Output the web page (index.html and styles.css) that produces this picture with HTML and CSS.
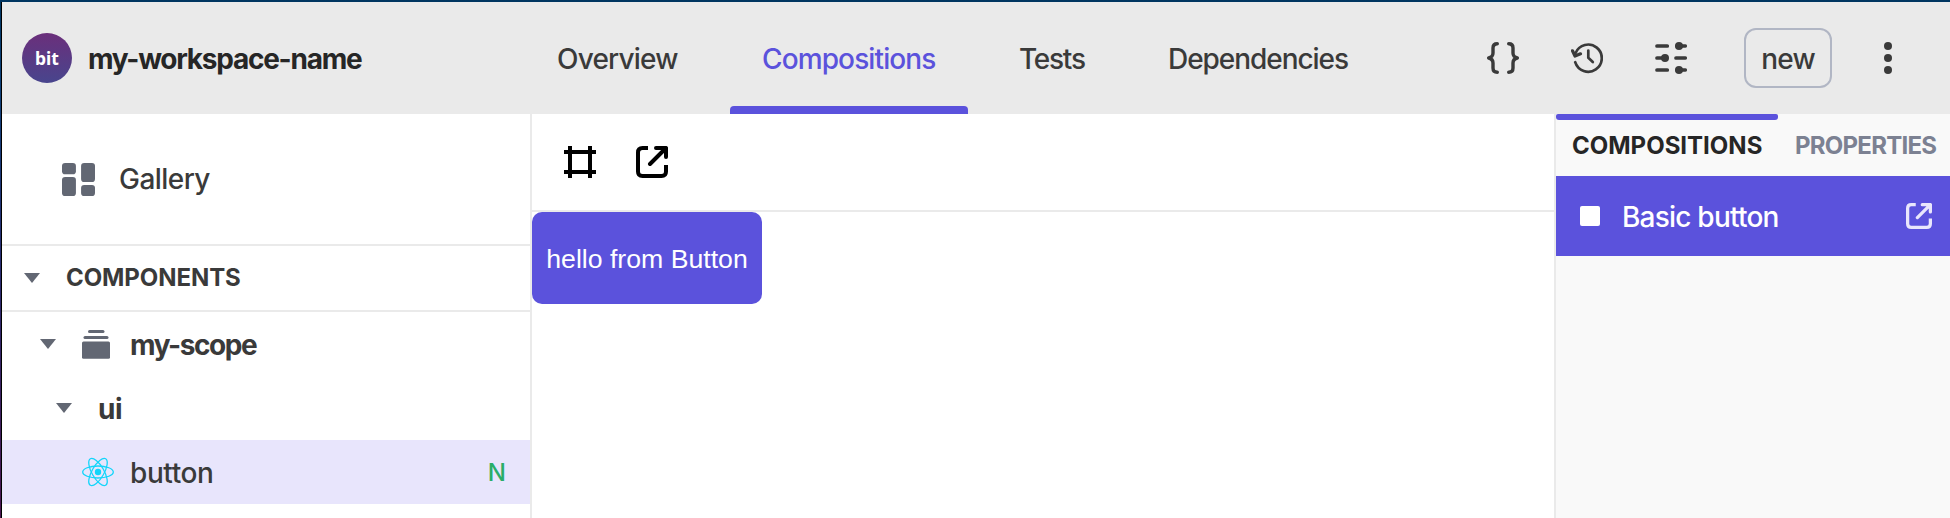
FILE: index.html
```html
<!DOCTYPE html>
<html lang="en">
<head>
<meta charset="utf-8">
<title>my-workspace-name</title>
<link rel="stylesheet" href="styles.css">
</head>
<body>
<div class="window">
  <header class="topbar">
    <div class="brand">
      <span class="logo">bit</span>
      <span class="workspace">my-workspace-name</span>
    </div>
    <nav class="tabs">
      <a class="tab tab-overview"><span>Overview</span></a>
      <a class="tab tab-compositions active"><span>Compositions</span></a>
      <a class="tab tab-tests"><span>Tests</span></a>
      <a class="tab tab-deps"><span>Dependencies</span></a>
    </nav>
    <div class="actions">
      <svg class="icon32" viewBox="0 0 32 32" fill="none" stroke="#3a3a3a" stroke-width="3.400" stroke-linecap="round" stroke-linejoin="round"><path d="M10.300 1.800Q6 1.800 6 6V11Q6 15 1.700 16Q6 17 6 21V26Q6 30.200 10.300 30.200M21.700 1.800Q26 1.800 26 6V11Q26 15 30.300 16Q26 17 26 21V26Q26 30.200 21.700 30.200"/></svg>
      <svg class="icon32" viewBox="0 0 32 32" fill="none" stroke="#3a3a3a" stroke-width="2.700" stroke-linecap="round" stroke-linejoin="round"><path d="M4.600 11A13.600 13.600 0 1 1 4.200 20.200"/><path d="M1.500 8.800L4 14L9.500 11.800" stroke-width="3.200"/><path d="M17.300 8.500V15.800L21.800 20"/></svg>
      <svg class="icon32" viewBox="0 0 32 32" fill="none" stroke="#3a3a3a" stroke-width="3.700" stroke-linecap="round"><path d="M2 4H12.300M22 4H30.200M2 16H9M21 16H30.200M2 28H12.300M22 28H30.200"/><g fill="#3a3a3a" stroke="none"><circle cx="24" cy="4" r="4"/><circle cx="10" cy="16" r="4"/><circle cx="24" cy="28" r="4"/></g></svg>
      <button class="new">new</button>
      <svg class="dots" viewBox="0 0 8 32" fill="#3a3a3a"><circle cx="4" cy="4" r="4"/><circle cx="4" cy="16" r="4"/><circle cx="4" cy="28" r="4"/></svg>
    </div>
  </header>
  <div class="main">
    <aside class="sidebar">
      <div class="gallery">
        <svg class="gallery-icon" viewBox="0 0 32 32" fill="#626773"><rect width="13.500" height="11" rx="3"/><rect y="13.500" width="13.500" height="18.500" rx="3"/><rect x="18.500" width="13.500" height="18.500" rx="3"/><rect x="18.500" y="21.300" width="13.500" height="10.700" rx="3"/></svg>
        <span class="gallery-label">Gallery</span>
      </div>
      <div class="section">
        <i class="caret"></i><span class="section-label">COMPONENTS</span>
      </div>
      <div class="tree">
        <div class="row scope">
          <i class="caret"></i>
          <svg class="scope-icon" viewBox="0 0 28 30" fill="#626773"><rect x="6" y="1" width="16.500" height="3" rx="1.500"/><rect x="1.500" y="7" width="25" height="3" rx="1.500"/><rect y="12.500" width="28" height="17.200" rx="1.500"/></svg>
          <span class="scope-label">my-scope</span>
        </div>
        <div class="row namespace"><i class="caret"></i><span class="ns-label">ui</span></div>
        <div class="row component">
          <svg class="react" viewBox="0 0 32 32" fill="none" stroke="#12d5fa" stroke-width="1.300"><circle cx="16" cy="16" r="3.200" fill="#12d5fa" stroke="none"/><ellipse cx="16" cy="16" rx="15.300" ry="6"/><ellipse cx="16" cy="16" rx="15.300" ry="6" transform="rotate(60 16 16)"/><ellipse cx="16" cy="16" rx="15.300" ry="6" transform="rotate(120 16 16)"/></svg>
          <span class="component-label">button</span>
          <span class="status">N</span>
        </div>
      </div>
    </aside>
    <main class="canvas">
      <div class="toolbar">
        <svg class="icon32" viewBox="0 0 32 32" fill="none" stroke="#000" stroke-width="4"><path d="M6 0V32M26 0V32M0 6H32M0 26H32"/></svg>
        <svg class="icon32" viewBox="0 0 32 32" fill="none" stroke="#000" stroke-width="4"><path d="M12 2H6.500Q2 2 2 6.500V25.500Q2 30 6.500 30H25.500Q30 30 30 25.500V19"/><path d="M20 2H30V11M30 2L14 18" stroke-linecap="round" stroke-linejoin="round"/></svg>
      </div>
      <div class="preview"><button class="demo">hello from Button</button></div>
    </main>
    <aside class="panel">
      <div class="panel-tabs">
        <span class="panel-tab current"><b>COMPOSITIONS</b></span>
        <span class="panel-tab props"><b>PROPERTIES</b></span>
      </div>
      <div class="entry">
        <i class="square"></i>
        <span class="entry-label">Basic button</span>
        <svg class="open" viewBox="0 0 32 32" fill="none" stroke="#e9e6fc" stroke-width="4"><path d="M12 2H6.500Q2 2 2 6.500V25.500Q2 30 6.500 30H25.500Q30 30 30 25.500V19"/><path d="M20 2H30V11M30 2L14 18" stroke-linecap="round" stroke-linejoin="round"/></svg>
      </div>
    </aside>
  </div>
</div>
</body>
</html>
```
FILE: styles.css
```css
* { box-sizing: border-box; }
body {
  margin: 0;
  height: 518px;
  overflow: hidden;
  padding: 2px 0 0 2px;
  background: linear-gradient(90deg, transparent 1px, #000 1px, #000 2px, transparent 2px) 0 2px no-repeat,
    linear-gradient(#003560 0, #0d4078 80px, #262b70 50%, #4a1650 100%);
  font-family: Inter, "Liberation Sans", sans-serif;
  font-size: 28px;
  font-weight: 500;
  color: #3a3a3a;
  white-space: nowrap;
}
svg { display: block; flex: none; }
button { font: inherit; color: inherit; background: none; margin: 0; }
.window { height: 516px; display: flex; flex-direction: column; background: #fff; }
.topbar { height: 112px; flex: none; display: flex; background: #eaeaea; }
.brand { width: 523px; display: flex; align-items: center; padding-left: 20px; gap: 16px; }
.logo {
  width: 50px; height: 50px; border-radius: 50%;
  background: linear-gradient(#6b2f7b, #48458d);
  color: #fff; font: bold 17.500px/51px "Noto Sans", sans-serif; text-align: center;
}
.workspace { font-weight: 700; color: #262626; letter-spacing: -1.250px; padding-top: 2px; }
.tabs { display: flex; gap: 20px; }
.tab { padding: 10px 0 0 32px; display: flex; align-items: center; border-bottom: 8px solid transparent; position: relative; }
.tab-overview { width: 185px; letter-spacing: -0.800px; }
.tab-compositions { width: 238px; letter-spacing: -0.880px; }
.tab-tests { width: 128px; padding-left: 31px; letter-spacing: -1.250px; }
.tab-deps { width: 243px; letter-spacing: -1.050px; }
.active { color: #5b52dc; }
.active::after { content: ""; position: absolute; left: 0; right: 0; bottom: -8px; height: 8px; border-radius: 4px 4px 0 0; background: #5b52dc; }
.icon32 { width: 32px; height: 32px; }
.actions { margin-left: auto; display: flex; align-items: center; padding-right: 58px; gap: 52px; }
.new { width: 88px; height: 60px; border: 2px solid #b1b6c4; border-radius: 12px; padding: 2px 0 0; margin: 0 0 0 5px; letter-spacing: -0.800px; }
.dots { width: 8px; height: 32px; }
.main { flex: 1; display: flex; min-height: 0; }
.sidebar { width: 530px; border-right: 2px solid #eaeaea; }
.gallery { height: 132px; border-bottom: 2px solid #eaeaea; display: flex; align-items: center; padding-left: 60px; gap: 24px; }
.gallery-icon { width: 33px; height: 33px; margin-top: 1px; }
.gallery-label { letter-spacing: -0.550px; }
.section { height: 66px; border-bottom: 2px solid #eaeaea; display: flex; align-items: center; padding-left: 22px; gap: 26px; font-weight: 700; font-size: 24px; letter-spacing: -0.080px; }
.section-label { padding-bottom: 2px; }
.caret { border: 8px solid transparent; border-top: 10px solid #626773; border-bottom: 0; }
.row { height: 64px; display: flex; align-items: center; }
.scope { padding-left: 38px; font-weight: 700; }
.scope-label { letter-spacing: -1.400px; padding-top: 2px; }
.scope-icon { width: 28px; height: 30px; margin: 0 20px 0 26px; }
.namespace { padding-left: 54px; gap: 26px; font-weight: 700; letter-spacing: -0.500px; }
.ns-label { padding-top: 1px; }
.component { background: #e8e5fc; padding: 0 24px 0 80px; }
.component-label { letter-spacing: -0.400px; padding-top: 1px; }
.react { width: 32px; height: 32px; margin-right: 16px; }
.status { margin-left: auto; color: #2aad68; font-size: 24px; font-weight: 500; }
.canvas { flex: 1; }
.toolbar { height: 98px; border-bottom: 2px solid #eaeaea; display: flex; align-items: center; padding-left: 32px; gap: 40px; }
.preview { display: flex; }
.demo { width: 230px; height: 92px; border: 0; border-radius: 10px; padding: 2px 0 0; background: #5b52dc; color: #fff; font: 26.667px "Liberation Sans", Arial, sans-serif; }
.panel { width: 396px; border-left: 2px solid #eaeaea; background: #f9f9f9; }
.panel-tabs { height: 62px; display: flex; font-size: 24px; }
.panel-tabs b { font-weight: 700; }
.panel-tab { padding: 0 16px 5px; border-top: 6px solid transparent; display: flex; align-items: center; position: relative; }
.current { width: 222px; color: #262626; }
.current::before { content: ""; position: absolute; left: 0; right: 0; top: -6px; height: 6px; border-radius: 2px 2px 3px 3px; background: #5b52dc; }
.props { color: #7c8192; letter-spacing: -0.750px; padding-left: 17px; padding-right: 0; }
.entry { height: 80px; background: #5b52dc; color: #fff; display: flex; align-items: center; padding: 0 18px 0 24px; gap: 22px; }
.entry-label { letter-spacing: -0.780px; padding-top: 1px; }
.square { width: 20px; height: 20px; border-radius: 2px; background: #fff; }
.open { width: 26px; height: 26px; margin-left: auto; }
```
